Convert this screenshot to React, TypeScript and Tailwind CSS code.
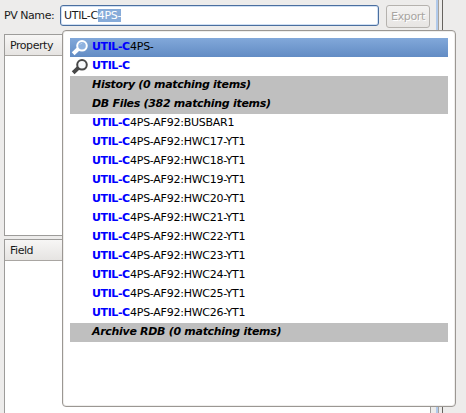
import React from "react";

type Row = { kind: "hit" | "group"; text: string; icon?: boolean; selected?: boolean };

const rows: Row[] = [
  { kind: "hit", text: "4PS-", icon: true, selected: true },
  { kind: "hit", text: "", icon: true },
  { kind: "group", text: "History (0 matching items)" },
  { kind: "group", text: "DB Files (382 matching items)" },
  { kind: "hit", text: "4PS-AF92:BUSBAR1" },
  ...[17, 18, 19, 20, 21, 22, 23, 24, 25, 26].map(
    (n): Row => ({ kind: "hit", text: `4PS-AF92:HWC${n}-YT1` }),
  ),
  { kind: "group", text: "Archive RDB (0 matching items)" },
];

function SearchIcon({ light }: { light?: boolean }) {
  const color = light ? "#ffffff" : "#484848";
  return (
    <svg width="19" height="19" viewBox="0 0 19 19" className="block">
      <path d="M4.6 14.4 L8 11.2" stroke={color} strokeWidth="4" strokeLinecap="square" />
      <circle cx="12" cy="7.8" r="4.8" fill={light ? "#8fb2df" : "#f6f8fa"} stroke={color} strokeWidth="2" />
      <path d="M9.6 6.9 Q10.5 5.4 12.3 5.2" fill="none" stroke={light ? "#b7cfec" : "#ffffff"} strokeWidth="1" />
    </svg>
  );
}

function SuggestionRow({ row }: { row: Row }) {
  if (row.kind === "group") {
    return (
      <div className="h-[19px] bg-[#bfbfbf] pl-[22px] font-bold italic leading-[17px] tracking-[-0.3px] text-black">
        {row.text}
      </div>
    );
  }
  return (
    <div
      className={`flex h-[19px] leading-[17px] text-black ${row.selected ? "bg-linear-to-b from-[#82a8da] to-[#628cc4]" : ""}`}
    >
      <div className="w-[22px] shrink-0">{row.icon && <SearchIcon light={row.selected} />}</div>
      <span className="w-[38px] shrink-0 font-bold tracking-[-0.4px] text-[#0000ff]">UTIL-C</span>
      <span className="tracking-[-0.25px]">{row.text}</span>
    </div>
  );
}

function Table({ title, className }: { title: string; className: string }) {
  return (
    <div className={`shrink-0 border border-[#9d9c9a] bg-white ${className}`}>
      <div className="h-[21px] border-b border-[#a9a6a2] bg-linear-to-b from-[#f7f6f5] to-[#e6e4e2] pl-[5px] leading-[21px] tracking-[-0.45px] text-[#1a1a1a]">
        {title}
      </div>
    </div>
  );
}

export default function App() {
  return (
    <div className="relative flex h-[413px] w-[466px] overflow-hidden bg-[#edeceb] font-['DejaVu_Sans',sans-serif] text-[11px] whitespace-nowrap">
      <div className="flex w-[436px] shrink-0 flex-col pl-1">
        <div className="flex h-[34px] shrink-0 items-start pt-[5px]">
          <span className="w-[56px] leading-[22px] tracking-[-0.45px] text-[#1a1a1a]">PV Name:</span>
          <div className="flex h-[21px] w-[319px] items-center rounded-[3px] border border-[#4b6f9f] bg-white pl-[3px] leading-[13px] tracking-[-0.3px] text-[#1a1a1a] shadow-[inset_0_0_0_1px_#d0e0f4]">
            <span>UTIL-C</span>
            <span className="h-[13px] bg-[#86abd9] text-white">4PS-</span>
          </div>
          <button className="ml-[7px] h-[23px] w-[44px] rounded-[3px] border border-[#b5b2ae] bg-linear-to-b from-[#f3f2f1] to-[#e7e5e3] leading-[21px] tracking-[-0.35px] text-[#a8a5a1] [text-shadow:1px_1px_0_#fff]">
            Export
          </button>
        </div>
        <Table title="Property" className="h-[202px] w-[427px]" />
        <Table title="Field" className="mt-[3px] h-[180px] w-[427px]" />
      </div>
      <div className="w-[2px] bg-[#b1caeb]" />
      <div className="w-px bg-[#a5a29e]" />
      <div className="w-[3px]" />
      <div className="w-px bg-[#66635f]" />

      <div className="absolute top-[30px] left-[62px] h-[377px] w-[394px] rounded-[4px] border border-[#9b9793] bg-white px-[7px] pt-[7px] shadow-[inset_0_0_0_1px_#efeeec]">
        {rows.map((row, i) => (
          <SuggestionRow key={i} row={row} />
        ))}
      </div>
    </div>
  );
}
